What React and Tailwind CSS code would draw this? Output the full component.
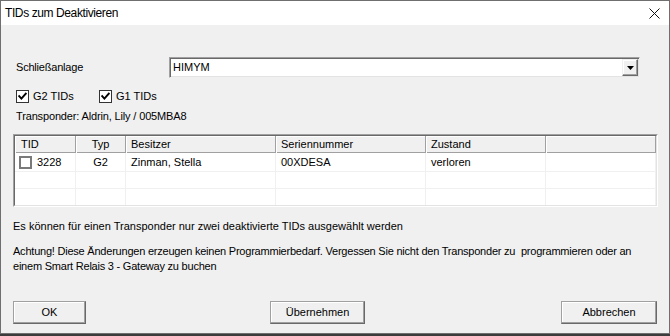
import React from 'react';

function CheckBox({ checked, gray }) {
  return (
    <span
      className={
        gray
          ? 'inline-flex h-[13px] w-[13px] shrink-0 items-center justify-center border-2 border-[#7a7a7a] bg-white'
          : 'inline-flex h-[13px] w-[13px] shrink-0 items-center justify-center border border-[#333333] bg-white'
      }
    >
      {checked && (
        <svg width="9" height="9" viewBox="0 0 9 9">
          <path d="M1.2 4.2 L3.4 6.6 L7.8 1.6" stroke="#000" strokeWidth="1.9" fill="none" strokeLinecap="square" />
        </svg>
      )}
    </span>
  );
}

function Button({ children, width }) {
  return (
    <button
      className={`${width} flex h-[23px] items-center justify-center border border-[#a0a0a0] border-r-[#696969] border-b-[#696969] bg-[#f0f0f0] text-[11px] text-black shadow-[inset_-1px_-1px_0_#a0a0a0,inset_1px_1px_0_#ffffff]`}
    >
      {children}
    </button>
  );
}

const cols = 'grid grid-cols-[61px_50px_150px_150px_120px_1fr]';

function App() {
  return (
    <div className="h-[336px] w-[670px] bg-[#3c3c3c] font-['Liberation_Sans',Arial,sans-serif] text-[11px] text-black">
      <div className="flex h-[334px] w-[670px] flex-col border border-[#6f6f6f] bg-[#f0f0f0]">
        {/* title bar */}
        <div className="flex h-[24px] shrink-0 items-center justify-between bg-white pl-[4px] pr-[9px]">
          <span className="text-[12px] tracking-[-0.4px]">TIDs zum Deaktivieren</span>
          <svg width="11" height="11" viewBox="0 0 11 11">
            <path d="M0.5 0.5 L10.5 10.5 M10.5 0.5 L0.5 10.5" stroke="#111" strokeWidth="1" fill="none" />
          </svg>
        </div>

        <div className="flex flex-1 flex-col px-[12px]">
          {/* Schließanlage */}
          <div className="mt-[32px] flex h-[21px] items-center pl-[3px]">
            <span className="w-[153px] leading-[13px] tracking-[-0.2px]">Schließanlage</span>
            <div className="flex h-[21px] w-[471px] items-center justify-between border border-[#a0a0a0] border-r-[#f0f0f0] border-b-[#f0f0f0] bg-white shadow-[inset_1px_1px_0_#696969,inset_-1px_-1px_0_#e3e3e3]">
              <span className="pl-[3px] leading-[13px]">HIMYM</span>
              <div className="mr-[1px] flex h-[17px] w-[16px] items-center justify-center border border-[#f0f0f0] border-r-[#696969] border-b-[#696969] bg-[#f0f0f0] shadow-[inset_-1px_-1px_0_#a0a0a0,inset_1px_1px_0_#ffffff]">
                <svg width="7" height="4" viewBox="0 0 7 4">
                  <path d="M0 0 H7 L3.5 4 Z" fill="#000" />
                </svg>
              </div>
            </div>
          </div>

          {/* checkboxes */}
          <div className="mt-[12px] flex h-[13px] items-center pl-[3px]">
            <div className="flex w-[83px] items-center gap-[4px]">
              <CheckBox checked />
              <span className="leading-[13px]">G2 TIDs</span>
            </div>
            <div className="flex items-center gap-[4px]">
              <CheckBox checked />
              <span className="leading-[13px]">G1 TIDs</span>
            </div>
          </div>

          <div className="mt-[7px] pl-[3px] leading-[13px] tracking-[-0.15px]">Transponder: Aldrin, Lily / 005MBA8</div>

          {/* table */}
          <div className="mt-[11px] h-[73px] w-[645px] border border-[#a0a0a0] border-r-[#ffffff] border-b-[#ffffff]">
            <div className="flex h-full flex-col border border-[#696969] border-r-[#e3e3e3] border-b-[#e3e3e3] bg-white">
              <div className={`${cols} h-[17px] shrink-0 border-b border-[#a0a0a0] bg-[#f0f0f0]`}>
                <div className="flex items-center border-r border-[#a0a0a0] pl-[6px] shadow-[inset_1px_1px_0_#ffffff]">TID</div>
                <div className="flex items-center justify-center border-r border-[#a0a0a0] shadow-[inset_1px_1px_0_#ffffff]">Typ</div>
                <div className="flex items-center border-r border-[#a0a0a0] pl-[5px] shadow-[inset_1px_1px_0_#ffffff]">Besitzer</div>
                <div className="flex items-center border-r border-[#a0a0a0] pl-[5px] shadow-[inset_1px_1px_0_#ffffff]">Seriennummer</div>
                <div className="flex items-center border-r border-[#a0a0a0] pl-[5px] shadow-[inset_1px_1px_0_#ffffff]">Zustand</div>
                <div className="border-r border-[#a0a0a0] shadow-[inset_1px_1px_0_#ffffff]" />
              </div>
              <div className={`${cols} h-[19px] shrink-0 border-b border-[#f0f0f0]`}>
                <div className="flex items-center gap-[5px] border-r border-[#f0f0f0] pl-[4px]">
                  <CheckBox gray />
                  <span>3228</span>
                </div>
                <div className="flex items-center justify-center border-r border-[#f0f0f0]">G2</div>
                <div className="flex items-center border-r border-[#f0f0f0] pl-[5px]">Zinman, Stella</div>
                <div className="flex items-center border-r border-[#f0f0f0] pl-[5px]">00XDESA</div>
                <div className="flex items-center border-r border-[#f0f0f0] pl-[5px]">verloren</div>
                <div className="border-r border-[#f0f0f0]" />
              </div>
              <div className={`${cols} h-[17px] shrink-0 border-b border-[#f0f0f0]`}>
                <div className="border-r border-[#f0f0f0]" />
                <div className="border-r border-[#f0f0f0]" />
                <div className="border-r border-[#f0f0f0]" />
                <div className="border-r border-[#f0f0f0]" />
                <div className="border-r border-[#f0f0f0]" />
                <div className="border-r border-[#f0f0f0]" />
              </div>
              <div className={`${cols} flex-1`}>
                <div className="border-r border-[#f0f0f0]" />
                <div className="border-r border-[#f0f0f0]" />
                <div className="border-r border-[#f0f0f0]" />
                <div className="border-r border-[#f0f0f0]" />
                <div className="border-r border-[#f0f0f0]" />
                <div className="border-r border-[#f0f0f0]" />
              </div>
            </div>
          </div>

          <div className="mt-[13px] leading-[13px]">
            Es können für einen Transponder nur zwei deaktivierte TIDs ausgewählt werden
          </div>

          <div className="mt-[11px] whitespace-pre leading-[15px] tracking-[-0.22px]">
            {'Achtung! Diese Änderungen erzeugen keinen Programmierbedarf. Vergessen Sie nicht den Transponder zu  programmieren oder an'}
            <br />
            {'einem Smart Relais 3 - Gateway zu buchen'}
          </div>

          {/* buttons */}
          <div className="mt-auto mb-[9px] flex">
            <Button width="w-[75px]">OK</Button>
            <div className="ml-[184px]">
              <Button width="w-[95px]">Übernehmen</Button>
            </div>
            <div className="ml-[196px]">
              <Button width="w-[96px]">Abbrechen</Button>
            </div>
          </div>
        </div>
      </div>
    </div>
  );
}

export default App;
